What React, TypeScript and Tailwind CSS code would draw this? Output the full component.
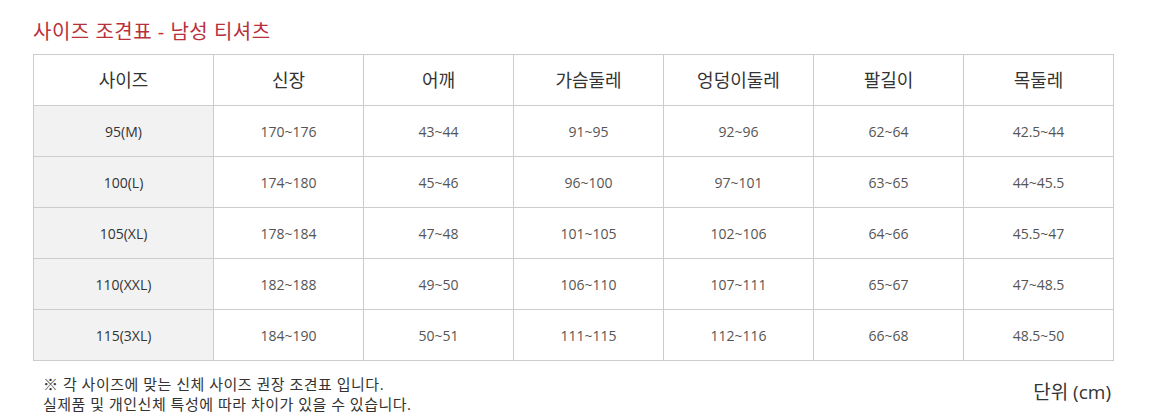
import React from "react";

const headers = ["사이즈", "신장", "어깨", "가슴둘레", "엉덩이둘레", "팔길이", "목둘레"];
const rows = [
  ["95(M)", "170~176", "43~44", "91~95", "92~96", "62~64", "42.5~44"],
  ["100(L)", "174~180", "45~46", "96~100", "97~101", "63~65", "44~45.5"],
  ["105(XL)", "178~184", "47~48", "101~105", "102~106", "64~66", "45.5~47"],
  ["110(XXL)", "182~188", "49~50", "106~110", "107~111", "65~67", "47~48.5"],
  ["115(3XL)", "184~190", "50~51", "111~115", "112~116", "66~68", "48.5~50"],
];

export default function App() {
  return (
    <div
      className="w-[1157px] h-[419px] bg-white pl-[33px] pt-[17px]"
      style={{ fontFamily: '"Open Sans", "Noto Sans CJK KR", sans-serif' }}
    >
      <div className="text-[20px] tracking-[0.5px] leading-[30px] text-[#b8303a] h-[37px]">사이즈 조견표 - 남성 티셔츠</div>
      <table className="border-collapse w-[1081px] table-fixed">
        <colgroup>
          <col className="w-[180px]" />
          <col className="w-[150px]" />
          <col className="w-[150px]" />
          <col className="w-[150px]" />
          <col className="w-[150px]" />
          <col className="w-[150px]" />
          <col className="w-[150px]" />
        </colgroup>
        <thead>
          <tr className="h-[51px]">
            {headers.map((h) => (
              <th key={h} className="border border-[#cccccc] font-normal text-[18px] text-[#333333] text-center p-0">
                {h}
              </th>
            ))}
          </tr>
        </thead>
        <tbody>
          {rows.map((r) => (
            <tr key={r[0]} className="h-[51px]">
              {r.map((c, i) => (
                <td
                  key={i}
                  className={
                    "border border-[#cccccc] text-center text-[14px] p-0 " +
                    (i === 0 ? "bg-[#f2f2f2] text-[#333333]" : "text-[#555555]")
                  }
                >
                  {c}
                </td>
              ))}
            </tr>
          ))}
        </tbody>
      </table>
      <div className="flex w-[1081px] justify-between pt-[13px]">
        <div className="pl-[10px] text-[15px] tracking-[0.5px] leading-[20px] text-[#333333]">
          <div>※ 각 사이즈에 맞는 신체 사이즈 권장 조견표 입니다.</div>
          <div>실제품 및 개인신체 특성에 따라 차이가 있을 수 있습니다.</div>
        </div>
        <div className="text-[19px] text-[#333333] pt-[4px] pr-[3px]">단위 (cm)</div>
      </div>
    </div>
  );
}
